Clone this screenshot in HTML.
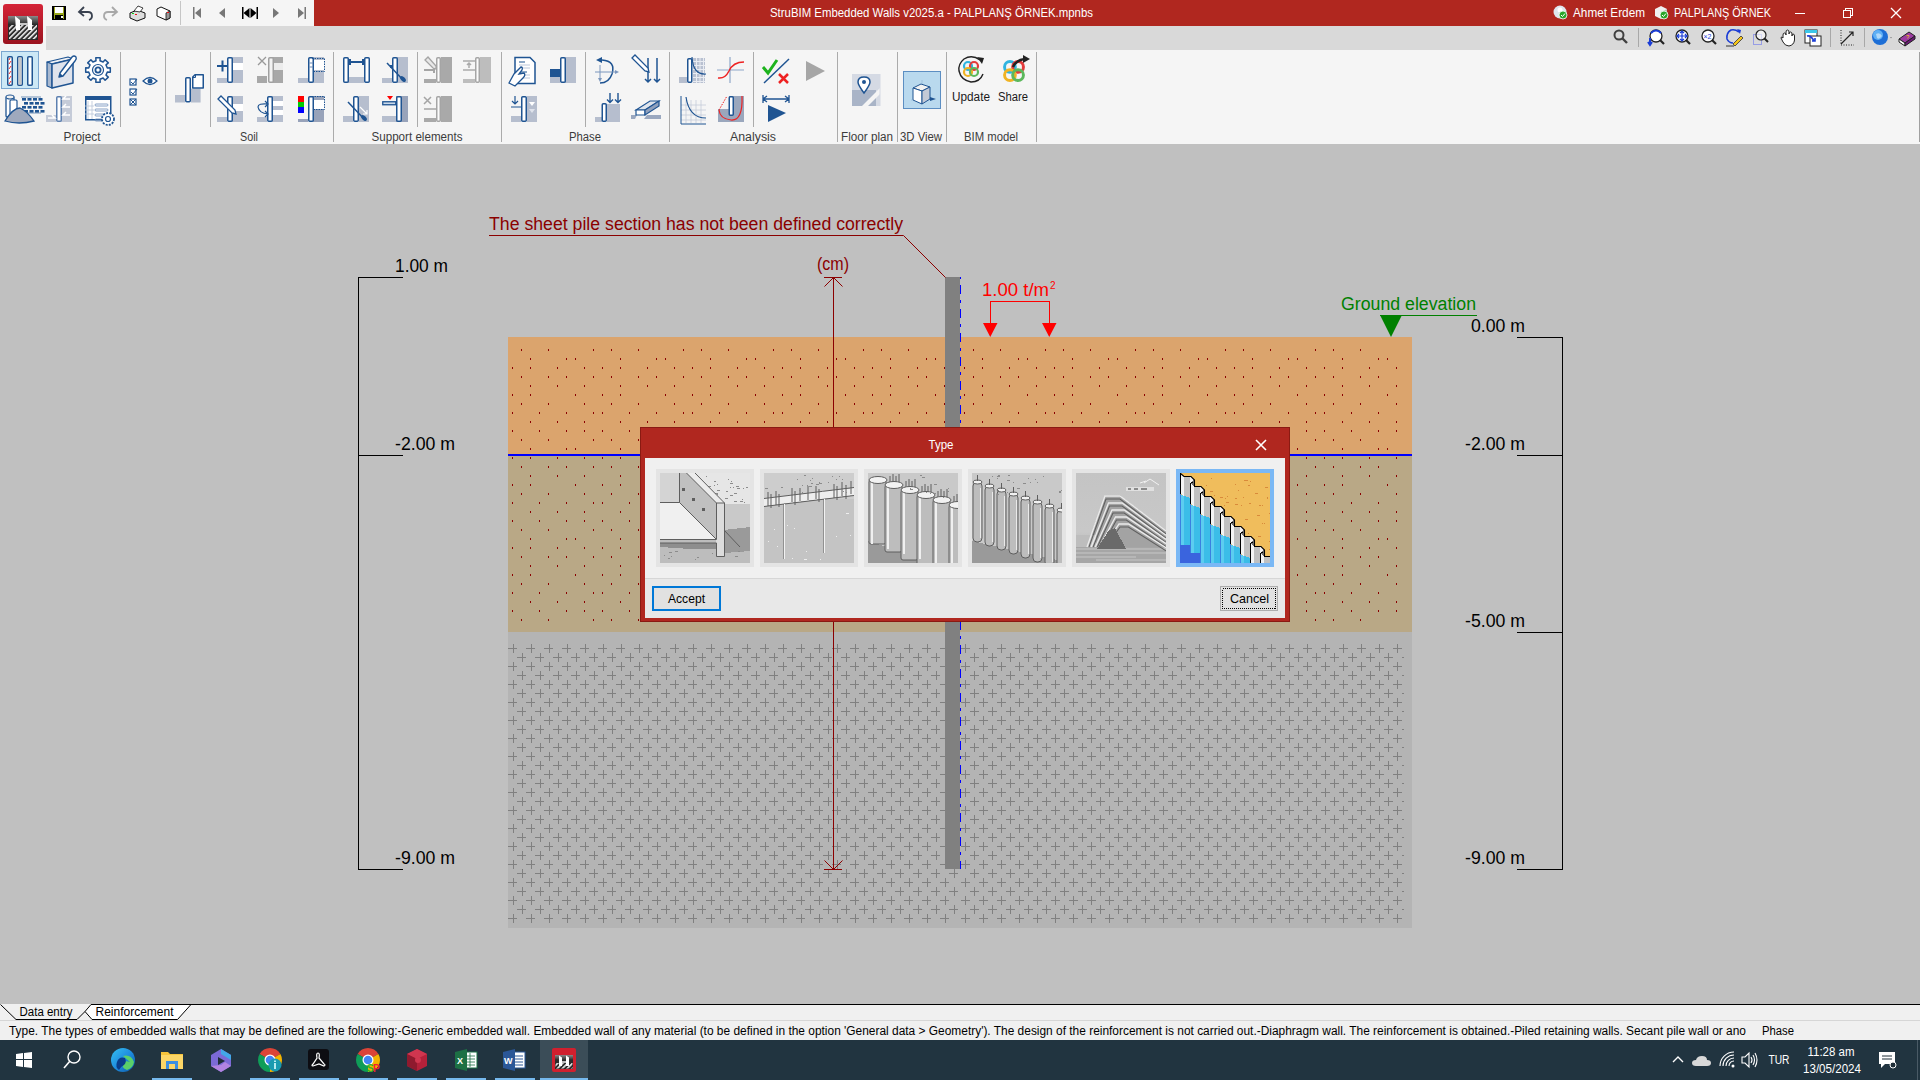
<!DOCTYPE html>
<html><head><meta charset="utf-8">
<style>
*{margin:0;padding:0}
html,body{width:1920px;height:1080px;overflow:hidden;background:#c0c0c0}
svg{position:absolute;left:0;top:0;font-family:'Liberation Sans', sans-serif}
</style></head><body>
<svg width="1920" height="1080" viewBox="0 0 1920 1080" shape-rendering="crispEdges">

<defs>
<pattern id="dotsL" patternUnits="userSpaceOnUse" x="512" y="349" width="90" height="90"><path d="M9 0h1v2h-1zM36 0h1v2h-1zM81 0h1v2h-1zM18 9h1v2h-1zM54 9h1v2h-1zM63 9h1v2h-1zM0 18h1v2h-1zM72 18h1v2h-1zM18 18h1v2h-1zM45 18h1v2h-1zM9 27h1v2h-1zM36 27h1v2h-1zM54 27h1v2h-1zM81 27h1v2h-1zM72 36h1v2h-1zM18 36h1v2h-1zM45 36h1v2h-1zM0 45h1v2h-1zM18 45h1v2h-1zM63 45h1v2h-1zM72 54h1v2h-1zM9 54h1v2h-1zM36 54h1v2h-1zM0 63h1v2h-1zM81 63h1v2h-1zM27 63h1v2h-1zM54 63h1v2h-1zM72 72h1v2h-1zM18 72h1v2h-1zM45 72h1v2h-1zM0 81h1v2h-1zM72 81h1v2h-1zM27 81h1v2h-1zM54 81h1v2h-1z" fill="#8b0000"/></pattern>
<pattern id="dotsR" patternUnits="userSpaceOnUse" x="964" y="349" width="90" height="90"><path d="M9 0h1v2h-1zM36 0h1v2h-1zM81 0h1v2h-1zM18 9h1v2h-1zM54 9h1v2h-1zM63 9h1v2h-1zM0 18h1v2h-1zM72 18h1v2h-1zM18 18h1v2h-1zM45 18h1v2h-1zM9 27h1v2h-1zM36 27h1v2h-1zM54 27h1v2h-1zM81 27h1v2h-1zM72 36h1v2h-1zM18 36h1v2h-1zM45 36h1v2h-1zM0 45h1v2h-1zM18 45h1v2h-1zM63 45h1v2h-1zM72 54h1v2h-1zM9 54h1v2h-1zM36 54h1v2h-1zM0 63h1v2h-1zM81 63h1v2h-1zM27 63h1v2h-1zM54 63h1v2h-1zM72 72h1v2h-1zM18 72h1v2h-1zM45 72h1v2h-1zM0 81h1v2h-1zM72 81h1v2h-1zM27 81h1v2h-1zM54 81h1v2h-1z" fill="#8b0000"/></pattern>
<pattern id="crossL" patternUnits="userSpaceOnUse" x="508" y="644" width="18" height="18"><path d="M0 4h9v1h-9zM5 0h1v9h-1zM9 13h9v1h-9zM14 9h1v9h-1z" fill="#808080"/></pattern>
<pattern id="crossR" patternUnits="userSpaceOnUse" x="961" y="644" width="18" height="18"><path d="M0 4h9v1h-9zM4 0h1v9h-1zM9 13h9v1h-9zM13 9h1v9h-1z" fill="#808080"/></pattern>
</defs>
<rect x="0" y="144" width="1920" height="860" fill="#c0c0c0"/>
<rect x="508" y="337" width="904" height="118" fill="#dba46d"/>
<rect x="508" y="455" width="904" height="177" fill="#b9a886"/>
<rect x="508" y="632" width="904" height="296" fill="#b4b4b4"/>
<rect x="508" y="344" width="437" height="283" fill="url(#dotsL)"/>
<rect x="961" y="344" width="442" height="283" fill="url(#dotsR)"/>
<rect x="508" y="644" width="450" height="279" fill="url(#crossL)"/>
<rect x="961" y="644" width="443" height="279" fill="url(#crossR)"/>
<rect x="508" y="454" width="904" height="2" fill="#0000ff"/>

<rect x="945" y="277" width="15" height="592" fill="#808080"/>
<line x1="960.5" y1="277" x2="960.5" y2="869" stroke="#0000ff" stroke-width="1" stroke-dasharray="9 6 3 6" stroke-dashoffset="16"/>
<path d="M358 277h45v1h-45zM358 277h1v592h-1zM358 455h45v1h-45zM358 869h45v1h-45z" fill="#000"/>
<path d="M1562 337h1v532h-1zM1517 337h45v1h-45zM1517 455h45v1h-45zM1517 632h45v1h-45zM1517 869h46v1h-46z" fill="#000"/>
<text x="395" y="272" font-size="18" fill="#000" text-anchor="start" font-weight="normal" textLength="53" lengthAdjust="spacingAndGlyphs">1.00 m</text>
<text x="395" y="450" font-size="18" fill="#000" text-anchor="start" font-weight="normal" textLength="60" lengthAdjust="spacingAndGlyphs">-2.00 m</text>
<text x="395" y="864" font-size="18" fill="#000" text-anchor="start" font-weight="normal" textLength="60" lengthAdjust="spacingAndGlyphs">-9.00 m</text>
<text x="1525" y="332" font-size="18" fill="#000" text-anchor="end" font-weight="normal" textLength="54" lengthAdjust="spacingAndGlyphs">0.00 m</text>
<text x="1525" y="450" font-size="18" fill="#000" text-anchor="end" font-weight="normal" textLength="60" lengthAdjust="spacingAndGlyphs">-2.00 m</text>
<text x="1525" y="627" font-size="18" fill="#000" text-anchor="end" font-weight="normal" textLength="60" lengthAdjust="spacingAndGlyphs">-5.00 m</text>
<text x="1525" y="864" font-size="18" fill="#000" text-anchor="end" font-weight="normal" textLength="60" lengthAdjust="spacingAndGlyphs">-9.00 m</text>
<text x="489" y="229.5" font-size="18" fill="#8b0000" text-anchor="start" font-weight="normal" textLength="414" lengthAdjust="spacingAndGlyphs">The sheet pile section has not been defined correctly</text>
<g shape-rendering="auto"><path d="M489 235.5H903.5L945.5 277.5" stroke="#8b0000" stroke-width="1" fill="none"/></g>
<text x="817" y="270" font-size="18" fill="#8b0000" text-anchor="start" font-weight="normal" textLength="32" lengthAdjust="spacingAndGlyphs">(cm)</text>
<path d="M833 277h1v593h-1zM824 277h18v1h-18zM824 869h18v1h-18z" fill="#8b0000"/>
<g shape-rendering="auto"><path d="M824.5 286.5L833.5 277.5L842.5 286.5M824.5 860.5L833.5 869.5L842.5 860.5" stroke="#8b0000" stroke-width="1" fill="none"/></g>
<text x="982" y="296" font-size="18" fill="#ff0000" text-anchor="start" font-weight="normal" textLength="67" lengthAdjust="spacingAndGlyphs">1.00 t/m</text>
<text x="1050" y="289" font-size="10" fill="#ff0000" text-anchor="start" font-weight="normal">2</text>
<path d="M990 301h60v1h-60zM990 301h1v23h-1zM1049 301h1v23h-1z" fill="#ff0000"/>
<g shape-rendering="auto"><path d="M983 323h14.5l-7.25 14zM1042 323h14.5l-7.25 14z" fill="#ff0000"/></g>
<text x="1341" y="309.5" font-size="18" fill="#008000" text-anchor="start" font-weight="normal" textLength="135" lengthAdjust="spacingAndGlyphs">Ground elevation</text>
<path d="M1380 315h97v1h-97z" fill="#008000"/>
<g shape-rendering="auto"><path d="M1380 315h22l-11 22z" fill="#008000"/></g>
<rect x="640" y="427" width="650" height="195" fill="#8a1a12"/>
<rect x="641" y="428" width="648" height="193" fill="#b0271f"/>
<rect x="645" y="458" width="640" height="160" fill="#f0f0f0"/>
<rect x="645" y="578" width="640" height="1" fill="#d6d6d6"/>
<rect x="645" y="579" width="640" height="39" fill="#e8e8e8"/>

<text x="941" y="449" font-size="12.5" fill="#fff" text-anchor="middle" font-weight="normal" textLength="25" lengthAdjust="spacingAndGlyphs">Type</text>
<g shape-rendering="auto"><path d="M1256 440l10 10M1266 440l-10 10" stroke="#fff" stroke-width="1.6"/></g>
<rect x="656" y="469" width="98" height="98" fill="#e4e4e4"/>
<rect x="760" y="469" width="98" height="98" fill="#e4e4e4"/>
<rect x="864" y="469" width="98" height="98" fill="#e4e4e4"/>
<rect x="968" y="469" width="98" height="98" fill="#e4e4e4"/>
<rect x="1072" y="469" width="98" height="98" fill="#e4e4e4"/>
<rect x="1176" y="469" width="98" height="98" fill="#7ab8f5"/>
<svg x="660" y="473" width="90" height="90" viewBox="0 0 90 90" overflow="hidden"><rect width="90" height="90" fill="#bdbdbd"/><rect x="0" y="0" width="90" height="31" fill="#e6e6e6"/><rect x="64" y="31" width="26" height="26" fill="#c9c9c9"/><path d="M64 57L90 54V78L64 80Z" fill="#9a9a9a"/><path d="M55 20h3v1h-3zM48 13h3v1h-3zM70 22h3v1h-3zM44 21h1v1h-1zM70 10h3v1h-3zM54 8h2v1h-2zM74 28h3v1h-3zM70 14h1v1h-1zM54 22h1v1h-1zM73 14h1v1h-1zM82 26h1v1h-1zM50 26h3v1h-3zM42 11h1v1h-1zM57 17h3v1h-3zM86 14h2v1h-2zM65 25h3v1h-3zM68 6h1v1h-1zM46 3h1v1h-1zM71 8h1v1h-1zM83 15h1v1h-1zM66 18h2v1h-2zM76 13h3v1h-3zM77 15h3v1h-3zM54 12h1v1h-1zM57 21h1v1h-1zM84 29h1v1h-1zM74 20h3v1h-3zM46 24h1v1h-1zM80 28h3v1h-3zM57 11h1v1h-1z" fill="#8c8c8c"/><path d="M8 85h2v1h-2zM11 83h1v1h-1zM52 80h1v1h-1zM37 84h2v1h-2zM15 78h3v1h-3zM78 78h2v1h-2zM75 83h3v1h-3zM35 86h1v1h-1zM4 82h1v1h-1zM9 79h3v1h-3z" fill="#8c8c8c"/><rect x="0" y="0" width="19" height="30" fill="#d4d4d4"/><path d="M0 30H19L56 66H0Z" fill="#f0f0f0"/><path d="M0 70H56V76H30L0 74Z" fill="#8e8e8e"/><path d="M19 0H26L56 30V66L19 30Z" fill="#c0c0c0"/><path d="M26 0H35L64 30H56Z" fill="#ececec"/><rect x="56" y="30" width="8" height="53" fill="#dcdcdc"/><g fill="none" stroke="#5e5e5e" stroke-width="1" shape-rendering="auto"><path d="M19.5 0V29.5H0M19.5 29.5L56.5 66.5H0M26.5 0L56.5 30V66M35 0L64.5 30V83.5H56.5V70H0M56.5 30H64.5M64 57L80 74"/></g><path d="M22 15h3v3h-3zM32 25h3v3h-3zM42 35h3v3h-3z" fill="#5e5e5e"/></svg>
<svg x="764" y="473" width="90" height="90" viewBox="0 0 90 90" overflow="hidden"><rect width="90" height="90" fill="#c4c4c4"/><rect width="90" height="26" fill="#cdcdcd"/><path d="M0 25L90 15V22L0 33Z" fill="#eeeeee"/><g shape-rendering="auto" fill="none" stroke="#5e5e5e"><path d="M0 25.5L90 14.5M0 33.5L90 22.5M20 31V86M60 26V80"/><path d="M4 19v14M7 21v14M12 18v14M15 21v13M28 15v14M31 18v14M36 15v13M44 13v14M52 13v13M55 16v13M70 11v14M73 13v14M78 9v14M82 12v14M87 8v13"/></g><path d="M20 31h1v55h-1zM60 26h1v54h-1z" fill="#f2f2f2"/><path d="M68 3h1v1h-1zM52 11h3v1h-3zM33 6h1v1h-1zM43 12h1v1h-1zM17 14h2v1h-2zM58 18h2v1h-2zM82 19h1v1h-1zM79 18h1v1h-1zM55 9h1v1h-1zM55 10h3v1h-3zM38 19h1v1h-1zM1 15h3v1h-3zM40 2h2v1h-2zM78 6h1v1h-1zM81 12h2v1h-2zM45 13h3v1h-3zM35 17h1v1h-1zM75 3h1v1h-1zM47 10h2v1h-2zM38 12h1v1h-1zM46 7h1v1h-1zM47 10h1v1h-1zM48 5h1v1h-1zM72 6h1v1h-1zM64 9h1v1h-1z" fill="#8c8c8c"/><path d="M30 55h1v1h-1zM86 62h1v1h-1zM13 73h1v1h-1zM42 78h1v1h-1zM56 86h1v1h-1zM10 56h1v1h-1zM72 63h1v1h-1zM28 85h1v1h-1zM4 68h1v1h-1zM40 86h3v1h-3zM23 52h1v1h-1zM82 40h3v1h-3z" fill="#eeeeee"/></svg>
<svg x="868" y="473" width="90" height="90" viewBox="0 0 90 90" overflow="hidden"><rect width="90" height="90" fill="#c9c9c9"/><path d="M0 68L70 90H0Z" fill="#9a9a9a"/><rect x="1" y="7" width="17" height="64" rx="2" fill="#bdbdbd" stroke="#5e5e5e" stroke-width="1" shape-rendering="auto"/><rect x="3" y="9" width="2" height="62" fill="#f0f0f0"/><ellipse cx="10" cy="7" rx="9" ry="3.5" fill="#f2f2f2" stroke="#5e5e5e" shape-rendering="auto"/><path d="M22 11v-8M25 9v-8M28 11v-8M31 9v-8" stroke="#5e5e5e" shape-rendering="auto"/><rect x="17" y="12" width="17" height="67" rx="2" fill="#bdbdbd" stroke="#5e5e5e" stroke-width="1" shape-rendering="auto"/><rect x="19" y="14" width="2" height="62" fill="#f0f0f0"/><ellipse cx="26" cy="12" rx="9" ry="3.5" fill="#f2f2f2" stroke="#5e5e5e" shape-rendering="auto"/><path d="M38 16v-8M41 14v-8M44 16v-8M47 14v-8" stroke="#5e5e5e" shape-rendering="auto"/><rect x="33" y="17" width="17" height="70" rx="2" fill="#bdbdbd" stroke="#5e5e5e" stroke-width="1" shape-rendering="auto"/><rect x="35" y="19" width="2" height="62" fill="#f0f0f0"/><ellipse cx="42" cy="17" rx="9" ry="3.5" fill="#f2f2f2" stroke="#5e5e5e" shape-rendering="auto"/><path d="M54 21v-8M57 19v-8M60 21v-8M63 19v-8" stroke="#5e5e5e" shape-rendering="auto"/><rect x="49" y="22" width="17" height="73" rx="2" fill="#bdbdbd" stroke="#5e5e5e" stroke-width="1" shape-rendering="auto"/><rect x="51" y="24" width="2" height="62" fill="#f0f0f0"/><ellipse cx="58" cy="22" rx="9" ry="3.5" fill="#f2f2f2" stroke="#5e5e5e" shape-rendering="auto"/><path d="M70 26v-8M73 24v-8M76 26v-8M79 24v-8" stroke="#5e5e5e" shape-rendering="auto"/><rect x="65" y="27" width="17" height="76" rx="2" fill="#bdbdbd" stroke="#5e5e5e" stroke-width="1" shape-rendering="auto"/><rect x="67" y="29" width="2" height="62" fill="#f0f0f0"/><ellipse cx="74" cy="27" rx="9" ry="3.5" fill="#f2f2f2" stroke="#5e5e5e" shape-rendering="auto"/><path d="M86 31v-8M89 29v-8M92 31v-8M95 29v-8" stroke="#5e5e5e" shape-rendering="auto"/><rect x="81" y="32" width="17" height="79" rx="2" fill="#bdbdbd" stroke="#5e5e5e" stroke-width="1" shape-rendering="auto"/><rect x="83" y="34" width="2" height="62" fill="#f0f0f0"/><ellipse cx="90" cy="32" rx="9" ry="3.5" fill="#f2f2f2" stroke="#5e5e5e" shape-rendering="auto"/><path d="M102 36v-8M105 34v-8M108 36v-8M111 34v-8" stroke="#5e5e5e" shape-rendering="auto"/><path d="M62 20h1v1h-1zM66 11h3v1h-3zM57 16h1v1h-1zM80 15h1v1h-1zM66 20h2v1h-2zM42 15h1v1h-1zM52 2h2v1h-2zM79 18h2v1h-2zM75 24h1v1h-1zM42 16h3v1h-3zM58 19h1v1h-1zM54 4h3v1h-3z" fill="#8c8c8c"/></svg>
<svg x="972" y="473" width="90" height="90" viewBox="0 0 90 90" overflow="hidden"><rect width="90" height="90" fill="#c9c9c9"/><path d="M0 68L90 88V90H0Z" fill="#9a9a9a"/><rect x="1" y="9" width="9" height="60" rx="4" fill="#bdbdbd" stroke="#5e5e5e" shape-rendering="auto"/><ellipse cx="5.5" cy="9" rx="4.5" ry="2" fill="#f2f2f2" stroke="#5e5e5e" shape-rendering="auto"/><rect x="5" y="2" width="1" height="6" fill="#5e5e5e"/><rect x="8" y="15" width="1" height="50" fill="#eaeaea"/><rect x="13" y="13" width="9" height="60" rx="4" fill="#bdbdbd" stroke="#5e5e5e" shape-rendering="auto"/><ellipse cx="17.5" cy="13" rx="4.5" ry="2" fill="#f2f2f2" stroke="#5e5e5e" shape-rendering="auto"/><rect x="17" y="6" width="1" height="6" fill="#5e5e5e"/><rect x="20" y="19" width="1" height="50" fill="#eaeaea"/><rect x="25" y="17" width="9" height="60" rx="4" fill="#bdbdbd" stroke="#5e5e5e" shape-rendering="auto"/><ellipse cx="29.5" cy="17" rx="4.5" ry="2" fill="#f2f2f2" stroke="#5e5e5e" shape-rendering="auto"/><rect x="29" y="10" width="1" height="6" fill="#5e5e5e"/><rect x="32" y="23" width="1" height="50" fill="#eaeaea"/><rect x="37" y="21" width="9" height="60" rx="4" fill="#bdbdbd" stroke="#5e5e5e" shape-rendering="auto"/><ellipse cx="41.5" cy="21" rx="4.5" ry="2" fill="#f2f2f2" stroke="#5e5e5e" shape-rendering="auto"/><rect x="41" y="14" width="1" height="6" fill="#5e5e5e"/><rect x="44" y="27" width="1" height="50" fill="#eaeaea"/><rect x="49" y="25" width="9" height="60" rx="4" fill="#bdbdbd" stroke="#5e5e5e" shape-rendering="auto"/><ellipse cx="53.5" cy="25" rx="4.5" ry="2" fill="#f2f2f2" stroke="#5e5e5e" shape-rendering="auto"/><rect x="53" y="18" width="1" height="6" fill="#5e5e5e"/><rect x="56" y="31" width="1" height="50" fill="#eaeaea"/><rect x="61" y="29" width="9" height="60" rx="4" fill="#bdbdbd" stroke="#5e5e5e" shape-rendering="auto"/><ellipse cx="65.5" cy="29" rx="4.5" ry="2" fill="#f2f2f2" stroke="#5e5e5e" shape-rendering="auto"/><rect x="65" y="22" width="1" height="6" fill="#5e5e5e"/><rect x="68" y="35" width="1" height="50" fill="#eaeaea"/><rect x="73" y="33" width="9" height="60" rx="4" fill="#bdbdbd" stroke="#5e5e5e" shape-rendering="auto"/><ellipse cx="77.5" cy="33" rx="4.5" ry="2" fill="#f2f2f2" stroke="#5e5e5e" shape-rendering="auto"/><rect x="77" y="26" width="1" height="6" fill="#5e5e5e"/><rect x="80" y="39" width="1" height="50" fill="#eaeaea"/><rect x="85" y="37" width="9" height="60" rx="4" fill="#bdbdbd" stroke="#5e5e5e" shape-rendering="auto"/><ellipse cx="89.5" cy="37" rx="4.5" ry="2" fill="#f2f2f2" stroke="#5e5e5e" shape-rendering="auto"/><rect x="89" y="30" width="1" height="6" fill="#5e5e5e"/><rect x="92" y="43" width="1" height="50" fill="#eaeaea"/><path d="M56 5h1v1h-1zM25 3h3v1h-3zM45 15h3v1h-3zM26 2h2v1h-2zM35 7h3v1h-3zM58 9h1v1h-1zM87 19h2v1h-2zM26 21h1v1h-1zM63 6h1v1h-1zM89 17h1v1h-1zM65 9h1v1h-1zM35 19h1v1h-1zM41 9h1v1h-1zM36 2h2v1h-2zM71 3h1v1h-1zM51 10h3v1h-3zM87 18h2v1h-2zM26 17h1v1h-1zM20 3h1v1h-1zM25 5h1v1h-1z" fill="#8c8c8c"/></svg>
<svg x="1076" y="473" width="90" height="90" viewBox="0 0 90 90" overflow="hidden"><defs><linearGradient id="t5" x1="0" y1="0" x2="0" y2="1"><stop offset="0" stop-color="#c4c4c4"/><stop offset="0.65" stop-color="#c8c8c8"/><stop offset="1" stop-color="#b0b0b0"/></linearGradient></defs><rect width="90" height="90" fill="url(#t5)"/><path d="M10 75L29 22H44L90 58V76Z" fill="#a3a3a3"/><rect x="0" y="62" width="20" height="14" fill="#bdbdbd"/><rect x="0" y="74" width="90" height="16" fill="#a6a6a6"/><path d="M0 76H90M0 80H90M0 84H60M20 87H90" stroke="#d0d0d0" stroke-width="0.8" shape-rendering="auto"/><path d="M11.0 74L29.0 23H44.0L90 58.0" fill="none" stroke="#ececec" stroke-width="1.3" shape-rendering="auto"/><path d="M13.0 74L30.0 26H44.0L90 61.0" fill="none" stroke="#5e5e5e" stroke-width="1.1" shape-rendering="auto"/><path d="M15.2 74L32.5 30H46.1L90 62.2" fill="none" stroke="#ececec" stroke-width="1.3" shape-rendering="auto"/><path d="M17.2 74L33.5 33H46.1L90 65.2" fill="none" stroke="#5e5e5e" stroke-width="1.1" shape-rendering="auto"/><path d="M19.4 74L36.0 37H48.2L90 66.4" fill="none" stroke="#ececec" stroke-width="1.3" shape-rendering="auto"/><path d="M21.4 74L37.0 40H48.2L90 69.4" fill="none" stroke="#5e5e5e" stroke-width="1.1" shape-rendering="auto"/><path d="M23.6 74L39.5 44H50.3L90 70.6" fill="none" stroke="#ececec" stroke-width="1.3" shape-rendering="auto"/><path d="M25.6 74L40.5 47H50.3L90 73.6" fill="none" stroke="#5e5e5e" stroke-width="1.1" shape-rendering="auto"/><path d="M27.8 74L43.0 51H52.4L90 74.8" fill="none" stroke="#ececec" stroke-width="1.3" shape-rendering="auto"/><path d="M29.8 74L44.0 54H52.4L90 77.8" fill="none" stroke="#5e5e5e" stroke-width="1.1" shape-rendering="auto"/><path d="M21 76L33 57L39 55L50 76Z" fill="#6a6a6a"/><path d="M50 14h28v4h-28z" fill="#e0e0e0"/><path d="M52 15h3v2h-3zM58 15h4v2h-4zM65 15h6v2h-6z" fill="#8a8a8a"/><path d="M68 10l6-4l9 6M64 10l6-2" stroke="#f2f2f2" stroke-width="1" fill="none" shape-rendering="auto"/></svg>
<svg x="1180" y="473" width="90" height="90" viewBox="0 0 90 90" overflow="hidden"><rect width="90" height="90" fill="#f0bd5c"/><path d="M23 63h1v1h-1zM26 67h3v1h-3zM77 42h1v1h-1zM55 11h1v1h-1zM64 84h2v1h-2zM53 48h1v1h-1zM39 44h2v1h-2zM30 18h3v1h-3zM15 50h1v1h-1zM87 24h1v1h-1zM62 60h3v1h-3zM84 50h1v1h-1zM70 8h1v1h-1zM78 42h2v1h-2zM68 60h1v1h-1zM46 29h3v1h-3zM49 77h1v1h-1zM69 30h2v1h-2zM31 5h1v1h-1zM62 73h1v1h-1zM30 61h1v1h-1zM82 50h1v1h-1zM55 74h3v1h-3zM28 77h1v1h-1zM75 20h1v1h-1zM64 7h3v1h-3zM26 74h1v1h-1zM63 24h1v1h-1zM58 17h1v1h-1zM29 63h1v1h-1zM89 40h1v1h-1zM19 74h3v1h-3zM82 32h1v1h-1zM85 14h3v1h-3zM22 72h1v1h-1zM87 25h1v1h-1zM45 25h1v1h-1zM73 80h2v1h-2zM47 49h3v1h-3zM65 46h3v1h-3zM68 12h2v1h-2zM79 32h2v1h-2zM35 55h3v1h-3zM89 68h2v1h-2zM34 84h2v1h-2zM34 22h1v1h-1zM78 63h3v1h-3zM71 77h1v1h-1zM32 36h1v1h-1zM33 76h3v1h-3zM55 31h3v1h-3zM52 54h3v1h-3zM89 76h1v1h-1zM42 41h1v1h-1zM49 63h2v1h-2zM40 24h3v1h-3zM61 32h1v1h-1zM76 20h2v1h-2zM76 78h1v1h-1zM74 76h3v1h-3zM18 63h1v1h-1zM66 7h2v1h-2zM44 32h1v1h-1zM42 34h1v1h-1zM39 35h1v1h-1zM38 81h1v1h-1zM47 23h1v1h-1zM55 25h2v1h-2zM26 12h1v1h-1zM26 35h1v1h-1z" fill="#d98a3a"/><path d="M0 21L10 25V90H0Z" fill="#3bbde8"/><rect x="1" y="22" width="3" height="68" fill="#5ccdf0"/><rect x="0" y="21" width="1" height="69" fill="#3a80e0"/><path d="M10 31L20 35V90H10Z" fill="#3bbde8"/><rect x="11" y="32" width="3" height="58" fill="#5ccdf0"/><rect x="10" y="31" width="1" height="59" fill="#3a80e0"/><path d="M20 41L30 45V90H20Z" fill="#3bbde8"/><rect x="21" y="42" width="3" height="48" fill="#5ccdf0"/><rect x="20" y="41" width="1" height="49" fill="#3a80e0"/><path d="M30 51L40 55V90H30Z" fill="#3bbde8"/><rect x="31" y="52" width="3" height="38" fill="#5ccdf0"/><rect x="30" y="51" width="1" height="39" fill="#3a80e0"/><path d="M40 61L50 65V90H40Z" fill="#3bbde8"/><rect x="41" y="62" width="3" height="28" fill="#5ccdf0"/><rect x="40" y="61" width="1" height="29" fill="#3a80e0"/><path d="M50 71L60 75V90H50Z" fill="#3bbde8"/><rect x="51" y="72" width="3" height="18" fill="#5ccdf0"/><rect x="50" y="71" width="1" height="19" fill="#3a80e0"/><path d="M60 81L70 85V90H60Z" fill="#3bbde8"/><rect x="61" y="82" width="3" height="8" fill="#5ccdf0"/><rect x="60" y="81" width="1" height="9" fill="#3a80e0"/><path d="M70 91L80 95V90H70Z" fill="#3bbde8"/><rect x="71" y="92" width="3" height="-2" fill="#5ccdf0"/><rect x="70" y="91" width="1" height="-1" fill="#3a80e0"/><path d="M80 101L90 105V90H80Z" fill="#3bbde8"/><rect x="81" y="102" width="3" height="-12" fill="#5ccdf0"/><rect x="80" y="101" width="1" height="-11" fill="#3a80e0"/><path d="M0 72H10V90H0ZM10 80H20V90H10Z" fill="#3a64de"/><path d="M1 1L4 4V23L1 21Z" fill="#f4f4f4"/><path d="M4 4H10V25L4 23Z" fill="#c0c0c0"/><path d="M10 4H11L14 7L10 10Z" fill="#f4f4f4"/><path d="M10 10L14 7V14H10Z" fill="#6e6e6e"/><circle cx="12" cy="9.5" r="1" fill="#000"/><rect x="0" y="0" width="1" height="21" fill="#000"/><path d="M11 11L14 14V33L11 31Z" fill="#f4f4f4"/><path d="M14 14H20V35L14 33Z" fill="#c0c0c0"/><path d="M20 14H21L24 17L20 20Z" fill="#f4f4f4"/><path d="M20 20L24 17V24H20Z" fill="#6e6e6e"/><circle cx="22" cy="19.5" r="1" fill="#000"/><rect x="10" y="10" width="1" height="21" fill="#000"/><path d="M21 21L24 24V43L21 41Z" fill="#f4f4f4"/><path d="M24 24H30V45L24 43Z" fill="#c0c0c0"/><path d="M30 24H31L34 27L30 30Z" fill="#f4f4f4"/><path d="M30 30L34 27V34H30Z" fill="#6e6e6e"/><circle cx="32" cy="29.5" r="1" fill="#000"/><rect x="20" y="20" width="1" height="21" fill="#000"/><path d="M31 31L34 34V53L31 51Z" fill="#f4f4f4"/><path d="M34 34H40V55L34 53Z" fill="#c0c0c0"/><path d="M40 34H41L44 37L40 40Z" fill="#f4f4f4"/><path d="M40 40L44 37V44H40Z" fill="#6e6e6e"/><circle cx="42" cy="39.5" r="1" fill="#000"/><rect x="30" y="30" width="1" height="21" fill="#000"/><path d="M41 41L44 44V63L41 61Z" fill="#f4f4f4"/><path d="M44 44H50V65L44 63Z" fill="#c0c0c0"/><path d="M50 44H51L54 47L50 50Z" fill="#f4f4f4"/><path d="M50 50L54 47V54H50Z" fill="#6e6e6e"/><circle cx="52" cy="49.5" r="1" fill="#000"/><rect x="40" y="40" width="1" height="21" fill="#000"/><path d="M51 51L54 54V73L51 71Z" fill="#f4f4f4"/><path d="M54 54H60V75L54 73Z" fill="#c0c0c0"/><path d="M60 54H61L64 57L60 60Z" fill="#f4f4f4"/><path d="M60 60L64 57V64H60Z" fill="#6e6e6e"/><circle cx="62" cy="59.5" r="1" fill="#000"/><rect x="50" y="50" width="1" height="21" fill="#000"/><path d="M61 61L64 64V83L61 81Z" fill="#f4f4f4"/><path d="M64 64H70V85L64 83Z" fill="#c0c0c0"/><path d="M70 64H71L74 67L70 70Z" fill="#f4f4f4"/><path d="M70 70L74 67V74H70Z" fill="#6e6e6e"/><circle cx="72" cy="69.5" r="1" fill="#000"/><rect x="60" y="60" width="1" height="21" fill="#000"/><path d="M71 71L74 74V93L71 91Z" fill="#f4f4f4"/><path d="M74 74H80V95L74 93Z" fill="#c0c0c0"/><path d="M80 74H81L84 77L80 80Z" fill="#f4f4f4"/><path d="M80 80L84 77V84H80Z" fill="#6e6e6e"/><circle cx="82" cy="79.5" r="1" fill="#000"/><rect x="70" y="70" width="1" height="21" fill="#000"/><path d="M81 81L84 84V103L81 101Z" fill="#f4f4f4"/><path d="M84 84H90V105L84 103Z" fill="#c0c0c0"/><path d="M90 84H91L94 87L90 90Z" fill="#f4f4f4"/><path d="M90 90L94 87V94H90Z" fill="#6e6e6e"/><circle cx="92" cy="89.5" r="1" fill="#000"/><rect x="80" y="80" width="1" height="21" fill="#000"/><path d="M0.5 0.5L4 3.5H11L14.5 7V13.5L14 13.5H21L24.5 17V23.5L24 23.5H31L34.5 27V33.5L34 33.5H41L44.5 37V43.5L44 43.5H51L54.5 47V53.5L54 53.5H61L64.5 57V63.5L64 63.5H71L74.5 67V73.5L74 73.5H81L84.5 77V83.5L84 83.5H91L94.5 87V93.5" fill="none" stroke="#000" stroke-width="1.1" shape-rendering="auto"/></svg>
<rect x="652" y="586" width="69" height="25" fill="#0078d7"/>
<rect x="654" y="588" width="65" height="21" fill="#e1e1e1"/>
<rect x="1220" y="586" width="58" height="25" fill="#adadad"/>
<rect x="1221" y="587" width="56" height="23" fill="#e1e1e1"/>
<rect x="1222.5" y="588.5" width="53" height="20" fill="none" stroke="#000" stroke-width="1" stroke-dasharray="1 1"/>

<text x="668" y="603" font-size="13" fill="#000" text-anchor="start" font-weight="normal" textLength="37" lengthAdjust="spacingAndGlyphs">Accept</text>
<text x="1230" y="603" font-size="13" fill="#000" text-anchor="start" font-weight="normal" textLength="39" lengthAdjust="spacingAndGlyphs">Cancel</text>
<rect x="0" y="0" width="1920" height="50" fill="#d9d9d9"/>
<rect x="0" y="0" width="314" height="26" fill="#f5f5f5"/>
<rect x="0" y="0" width="46" height="50" fill="#f5f5f5"/>
<rect x="314" y="0" width="1606" height="26" fill="#b0271f"/>
<rect x="0" y="50" width="1920" height="94" fill="#f5f5f5"/>

<text x="770" y="17" font-size="12.5" fill="#fff" text-anchor="start" font-weight="normal" textLength="323" lengthAdjust="spacingAndGlyphs">StruBIM Embedded Walls v2025.a - PALPLANŞ ÖRNEK.mpnbs</text>
<text x="1573" y="17" font-size="12.5" fill="#fff" text-anchor="start" font-weight="normal" textLength="72" lengthAdjust="spacingAndGlyphs">Ahmet Erdem</text>
<text x="1674" y="17" font-size="12.5" fill="#fff" text-anchor="start" font-weight="normal" textLength="97" lengthAdjust="spacingAndGlyphs">PALPLANŞ ÖRNEK</text>
<rect x="1795" y="13" width="10" height="1" fill="#fff"/>
<path d="M1843.5 10.5h7v7h-7zM1845.5 10.5v-2h7v7h-2" stroke="#fff" fill="none"/>
<g shape-rendering="auto"><path d="M1891 8l10 10M1901 8l-10 10" stroke="#fff" stroke-width="1.3"/></g>
<g transform="translate(3,4)" shape-rendering="auto"><defs><linearGradient id="lg" x1="0" y1="0" x2="0" y2="1"><stop offset="0" stop-color="#d42437"/><stop offset="1" stop-color="#9b1420"/></linearGradient><pattern id="hat" patternUnits="userSpaceOnUse" width="3.5" height="3.5" patternTransform="rotate(45)"><rect width="3.5" height="3.5" fill="#2e2e2e"/><rect width="1.6" height="3.5" fill="#e8e8e8"/></pattern><linearGradient id="lgd" x1="0" y1="0" x2="0" y2="1"><stop offset="0" stop-color="#8a8a8a"/><stop offset="0.35" stop-color="#2b2b2b"/></linearGradient></defs><rect x="0" y="0" width="40" height="40" rx="3" fill="url(#lg)"/><rect x="5" y="12" width="30" height="24" fill="url(#lgd)"/><rect x="6" y="21" width="28" height="14" fill="url(#hat)"/><path d="M12 12L17 16V26H13Z" fill="#fff"/><path d="M24 12L29 16V26H25Z" fill="#fff"/><path d="M17 19H25V21H17Z" fill="#c8c8c8"/></g>
<g transform="translate(52,6)" shape-rendering="auto"><rect x="0" y="0" width="14" height="14" fill="#000"/><rect x="2" y="1" width="10" height="12" fill="#9aa81a"/><rect x="3" y="1" width="8" height="6" fill="#fff"/><rect x="3" y="9" width="8" height="4" fill="#000"/><rect x="9" y="10" width="2" height="2" fill="#fff"/></g>
<g transform="translate(77,5)" shape-rendering="auto"><path d="M3 7H11Q15 7 15 11Q15 14 12 15" fill="none" stroke="#3a4250" stroke-width="1.8"/><path d="M7 2L2 7L7 11" fill="none" stroke="#3a4250" stroke-width="1.8"/></g>
<g transform="translate(103,5)" shape-rendering="auto"><path d="M13 7H5Q1 7 1 11Q1 14 4 15" fill="none" stroke="#a8a8a8" stroke-width="1.8"/><path d="M9 2L14 7L9 11" fill="none" stroke="#a8a8a8" stroke-width="1.8"/></g>
<g transform="translate(129,5)" shape-rendering="auto"><path d="M1 8L8 5L16 8V13L8 16L1 13Z" fill="#ddd" stroke="#111" stroke-width="1"/><path d="M5 6L9 1L14 3L11 7Z" fill="#fff" stroke="#111" stroke-width="0.8"/><rect x="3" y="8" width="2" height="1" fill="#1c1"/><rect x="6" y="9" width="2" height="1" fill="#e11"/></g>
<g transform="translate(155,5)" shape-rendering="auto"><path d="M2 4L6 2L15 6V13L11 15L2 11Z" fill="#fff" stroke="#111" stroke-width="1"/><path d="M11 8L15 6V13L11 15Z" fill="#999" stroke="#111" stroke-width="0.8"/><rect x="12" y="7" width="2" height="1" fill="#e11"/></g>
<rect x="180" y="1" width="1" height="24" fill="#c6c6c6"/>
<g transform="translate(193,7)" shape-rendering="auto"><rect x="0" y="0" width="1.5" height="12" fill="#777"/><path d="M8 1V11L2 6Z" fill="#777"/></g>
<g transform="translate(219,8)" shape-rendering="auto"><path d="M6 0V10L0 5Z" fill="#777"/></g>
<g transform="translate(242,7)" shape-rendering="auto"><rect x="0" y="0" width="1.5" height="12" fill="#000"/><path d="M7.5 1V11L1.5 6Z" fill="#000"/><path d="M8.5 1V11L14.5 6Z" fill="#000"/><rect x="14.5" y="0" width="1.5" height="12" fill="#000"/></g>
<g transform="translate(273,8)" shape-rendering="auto"><path d="M0 0V10L6 5Z" fill="#777"/></g>
<g transform="translate(298,7)" shape-rendering="auto"><path d="M0 1V11L6 6Z" fill="#777"/><rect x="6.5" y="0" width="1.5" height="12" fill="#777"/></g>
<g transform="translate(1553,5)" shape-rendering="auto"><circle cx="7" cy="7" r="6.5" fill="#dfe6ee"/><circle cx="7" cy="5" r="2.5" fill="#fff"/><circle cx="10" cy="10" r="4" fill="#2aa52a" stroke="#fff" stroke-width="0.8"/><path d="M8 10l1.5 1.5L12 8.5" stroke="#fff" stroke-width="1" fill="none"/></g>
<g transform="translate(1654,5)" shape-rendering="auto"><path d="M1 4L7 1L13 4V11L7 14L1 11Z" fill="#f0f0f0"/><path d="M7 7L13 4V11L7 14Z" fill="#bbb"/><circle cx="10" cy="10" r="4" fill="#2aa52a" stroke="#fff" stroke-width="0.8"/><path d="M8 10l1.5 1.5L12 8.5" stroke="#fff" stroke-width="1" fill="none"/></g>
<g transform="translate(1613,29)" shape-rendering="auto"><circle cx="6" cy="6" r="4.5" fill="none" stroke="#404040" stroke-width="2"/><path d="M9 9L14 14" stroke="#404040" stroke-width="2.4"/></g>
<rect x="1638" y="28" width="1" height="19" fill="#a8a8a8"/>
<g transform="translate(1648,29)" shape-rendering="auto"><circle cx="8" cy="7" r="6" fill="#fff" stroke="#222" stroke-width="1.3"/><path d="M12 11L16 15" stroke="#222" stroke-width="2.2"/><path d="M3 4Q8 -1 13 4" fill="none" stroke="#1a3cd6" stroke-width="2"/><path d="M2 9V15M0 13L2 16L4 13" stroke="#1a3cd6" stroke-width="2" fill="none"/></g>
<g transform="translate(1674,29)" shape-rendering="auto"><circle cx="8" cy="7" r="6" fill="#fff" stroke="#222" stroke-width="1.3"/><path d="M8 2V12M3 7H13M6 4L8 2L10 4M6 10L8 12L10 10M5 5L3 7L5 9M11 5L13 7L11 9" stroke="#1a3cd6" stroke-width="1.2" fill="none"/><path d="M12 11L16 15" stroke="#222" stroke-width="2.2"/></g>
<g transform="translate(1700,29)" shape-rendering="auto"><circle cx="8" cy="7" r="6" fill="#fff" stroke="#222" stroke-width="1.3"/><text x="3.5" y="10" font-size="7" fill="#1a3cd6">×2</text><path d="M12 11L16 15" stroke="#222" stroke-width="2.2"/></g>
<g transform="translate(1726,29)" shape-rendering="auto"><path d="M13 3Q9 0 5 1Q0 4 1 10Q3 14 7 14" fill="none" stroke="#1a3cd6" stroke-width="1.6"/><path d="M11 0L15 1L14 5Z" fill="#1a3cd6"/><path d="M7 15L15 7L17 9L9 17Z" fill="#f5c518" stroke="#333" stroke-width="0.8"/><path d="M0 17H8" stroke="#333"/></g>
<g transform="translate(1752,29)" shape-rendering="auto"><rect x="1.5" y="5.5" width="8" height="10" fill="none" stroke="#5560f0" stroke-dasharray="1 1"/><circle cx="9" cy="6" r="5" fill="#fff" fill-opacity="0.6" stroke="#222" stroke-width="1.2"/><path d="M12.5 9.5L16 13" stroke="#222" stroke-width="2"/></g>
<g transform="translate(1780,29)" shape-rendering="auto"><path d="M3 9V6Q3 4 4.5 4Q6 4 6 6V3Q6 1 7.5 1Q9 1 9 3V5Q9 3 10.5 3Q12 3 12 5V7Q12 5 13 5Q14.5 5 14.5 7V11Q14 16 9 17Q5 17 3 13L1 9Q1 7 3 9Z" fill="#fff" stroke="#222" stroke-width="1"/></g>
<g transform="translate(1804,29)" shape-rendering="auto"><rect x="1" y="1" width="12" height="13" fill="#fff" stroke="#222"/><rect x="1" y="1" width="12" height="3" fill="#3cc6e8"/><rect x="6" y="7" width="11" height="10" fill="#fff" stroke="#222"/><path d="M3 7Q7 6 10 12M8 12H11V9" stroke="#1a3cd6" stroke-width="1.6" fill="none"/></g>
<rect x="1830" y="28" width="1" height="19" fill="#a8a8a8"/>
<g transform="translate(1838,29)" shape-rendering="auto"><path d="M3 1V16H16" fill="none" stroke="#222" stroke-dasharray="1 1.5"/><path d="M3 15L15 3M11 3H15V7" stroke="#222" stroke-width="1.2" fill="none"/></g>
<rect x="1864" y="28" width="1" height="19" fill="#a8a8a8"/>
<g transform="translate(1872,29)" shape-rendering="auto"><circle cx="8" cy="8" r="8" fill="#1e6fd6"/><circle cx="6" cy="6" r="5" fill="#5fb0f5"/><path d="M4 5Q8 3 10 7Q7 11 5 9Z" fill="#fff" fill-opacity="0.5"/><path d="M18 8l2 0l-1 1.5z" fill="#888"/></g>
<g transform="translate(1898,29)" shape-rendering="auto"><path d="M1 10L11 3L17 7L7 14Z" fill="#9b3aa0" stroke="#222"/><path d="M1 10V13L7 17V14Z" fill="#fff" stroke="#222"/><path d="M7 14V17L17 10V7Z" fill="#6d1a77" stroke="#222"/><text x="8" y="10" font-size="6" fill="#f5d000">?</text></g>
<rect x="1.5" y="51.5" width="37" height="37" fill="#cce8f6" stroke="#7ba6cf"/>
<g transform="translate(7,56)" shape-rendering="auto"><rect x="0.75" y="0.75" width="4.5" height="28.5" rx="1" fill="#fff" stroke="#1f5492" stroke-width="1.5"/><rect x="10.75" y="0.75" width="4.5" height="28.5" rx="1" fill="#fff" stroke="#1f5492" stroke-width="1.5"/><rect x="20.75" y="0.75" width="4.5" height="28.5" rx="1" fill="#fff" stroke="#1f5492" stroke-width="1.5"/><path d="M2 28L4 25M2 23L4 20M2 18L4 15M2 13L4 10M2 8L4 5M2 4L3 2" stroke="#e33" stroke-width="1"/><rect x="11.5" y="1.5" width="3" height="27" fill="#c8c8c8"/></g>
<g transform="translate(46,54)" shape-rendering="auto"><path d="M1 8L22 3L27 5L6 10Z" fill="#eef1f6" stroke="#1f5492" stroke-width="1.2" stroke-linejoin="round"/><path d="M1 8L6 10V34L1 32Z" fill="#a9b9d0" stroke="#1f5492" stroke-width="1.2" stroke-linejoin="round"/><path d="M6 10L27 5V29L6 34Z" fill="#dfe3ec" stroke="#1f5492" stroke-width="1.5" stroke-linejoin="round"/><path d="M14 19L26 3Q28 1 30 3Q31 5 29 7L17 22L13 23Z" fill="#fff" stroke="#1f5492" stroke-width="1.4" stroke-linejoin="round"/><path d="M13 23L14 19L17 22Z" fill="#1f5492"/></g>
<g transform="translate(85,57)" shape-rendering="auto"><path d="M25.3 10.8L25.3 15.2L22.3 15.0L21.0 18.1L23.3 20.1L20.1 23.3L18.1 21.0L15.0 22.3L15.2 25.3L10.8 25.3L11.0 22.3L7.9 21.0L5.9 23.3L2.7 20.1L5.0 18.1L3.7 15.0L0.7 15.2L0.7 10.8L3.7 11.0L5.0 7.9L2.7 5.9L5.9 2.7L7.9 5.0L11.0 3.7L10.8 0.7L15.2 0.7L15.0 3.7L18.1 5.0L20.1 2.7L23.3 5.9L21.0 7.9L22.3 11.0Z" fill="#fff" stroke="#1f5492" stroke-width="1.5" stroke-linejoin="round"/><circle cx="13" cy="13" r="5.5" fill="none" stroke="#1f5492" stroke-width="1.2"/><circle cx="13" cy="13" r="2.6" fill="none" stroke="#1f5492" stroke-width="1.8"/></g>
<g transform="translate(4,94)" shape-rendering="auto"><rect x="18.0" y="4" width="4" height="2.6" fill="#1f5492"/><rect x="23.5" y="4" width="4" height="2.6" fill="#1f5492"/><rect x="29.0" y="4" width="4" height="2.6" fill="#1f5492"/><rect x="34.5" y="4" width="4" height="2.6" fill="#1f5492"/><rect x="20.0" y="8" width="4" height="2.6" fill="#1f5492"/><rect x="25.5" y="8" width="4" height="2.6" fill="#1f5492"/><rect x="31.0" y="8" width="4" height="2.6" fill="#1f5492"/><rect x="36.5" y="8" width="4" height="2.6" fill="#1f5492"/><rect x="18.0" y="12" width="4" height="2.6" fill="#1f5492"/><rect x="23.5" y="12" width="4" height="2.6" fill="#1f5492"/><rect x="29.0" y="12" width="4" height="2.6" fill="#1f5492"/><rect x="34.5" y="12" width="4" height="2.6" fill="#1f5492"/><rect x="20.0" y="16" width="4" height="2.6" fill="#1f5492"/><rect x="25.5" y="16" width="4" height="2.6" fill="#1f5492"/><rect x="31.0" y="16" width="4" height="2.6" fill="#1f5492"/><rect x="36.5" y="16" width="4" height="2.6" fill="#1f5492"/><path d="M17 3H37M17 19H37" stroke="#1f5492" stroke-width="0.6"/><rect x="2" y="3" width="8" height="20" rx="1" fill="#fff" stroke="#1f5492" stroke-width="1.3"/><ellipse cx="6" cy="3" rx="4" ry="2" fill="#f0f0f0" stroke="#1f5492" stroke-width="1.1"/><rect x="6" y="6" width="7" height="17" rx="1" fill="#fff" stroke="#1f5492" stroke-width="1.2"/><path d="M1 27Q9 14 16 14Q23 17 30 27Q15 31 1 27Z" fill="#9fa9bd" stroke="#1f5492" stroke-width="1.3"/></g>
<g transform="translate(46,96)" shape-rendering="auto"><rect x="14" y="0" width="12" height="26" fill="#c5cbd8"/><rect x="0" y="19" width="10" height="7" fill="#c5cbd8"/><rect x="10.75" y="0.75" width="4.5" height="24.5" rx="1" fill="#fff" stroke="#5d80b0" stroke-width="1.5"/><path d="M24 3H17l3-3M24 11H17l3-3M24 19H17l3-3M2 22H9l-3-3" stroke="#fff" stroke-width="1.5" fill="none"/></g>
<g transform="translate(85,96)" shape-rendering="auto"><rect x="0.75" y="0.75" width="25" height="23" fill="#fff" stroke="#1f5492" stroke-width="1.5"/><rect x="0" y="0" width="26" height="4" fill="#1f5492"/><rect x="10" y="8" width="13" height="2" rx="1" fill="none" stroke="#6a8bb9" stroke-width="0.8"/><rect x="10" y="13" width="13" height="2" rx="1" fill="none" stroke="#6a8bb9" stroke-width="0.8"/><rect x="10" y="18" width="13" height="2" rx="1" fill="none" stroke="#6a8bb9" stroke-width="0.8"/><rect x="10" y="23" width="13" height="2" rx="1" fill="none" stroke="#6a8bb9" stroke-width="0.8"/><path d="M3 5V23M7 5V23M0 10H9M0 14H9M0 18H9" stroke="#b9c5d8" stroke-width="0.8"/><circle cx="23" cy="23" r="6" fill="#fff" stroke="#1f5492" stroke-width="1.8" stroke-dasharray="2 1.2"/><circle cx="23" cy="23" r="2.5" fill="none" stroke="#1f5492" stroke-width="1.2"/></g>
<g transform="translate(129,76)" shape-rendering="auto"><rect x="1" y="3" width="6" height="6" fill="#fff" stroke="#1f5492" stroke-width="1.2"/><rect x="1" y="13" width="6" height="6" fill="#fff" stroke="#1f5492" stroke-width="1.2"/><rect x="1" y="23" width="6" height="6" fill="#fff" stroke="#1f5492" stroke-width="1.2"/><path d="M2 6l2 2l4-5M2 16l2 2l4-5M1 23l6 6M7 23l-6 6" fill="none" stroke="#1f5492" stroke-width="1"/><path d="M14 5Q21 -2 28 5Q21 12 14 5Z" fill="#fff" stroke="#1f5492" stroke-width="1.2"/><circle cx="21" cy="5" r="2.5" fill="#1f5492"/></g>
<g transform="translate(175,74)" shape-rendering="auto"><rect x="0" y="21" width="10" height="7.5" fill="#b6bece"/><rect x="16" y="14.7" width="9.6" height="13.8" fill="#b6bece"/><rect x="10.75" y="3.75" width="4.5" height="24.1" rx="1" fill="#fff" stroke="#1f5492" stroke-width="1.5"/><path d="M20 0.75H28.25V14H17.75V3Z" fill="#fff" stroke="#1f5492" stroke-width="1.5" stroke-linejoin="round"/><path d="M17.75 3.5H20.5V0.75" fill="none" stroke="#1f5492" stroke-width="1"/></g>
<g transform="translate(217,57)" shape-rendering="auto"><rect x="15" y="0" width="11" height="26" fill="#b6bece"/><rect x="0" y="21" width="10" height="5" fill="#b6bece"/><rect x="10.75" y="0.75" width="4.5" height="24.5" rx="1" fill="#fff" stroke="#1f5492" stroke-width="1.5"/><rect x="16" y="6" width="10" height="7" fill="#fff"/><path d="M0 9H11M5.5 3.5V14.5" stroke="#1f5492" stroke-width="2"/></g>
<g transform="translate(257,57)" shape-rendering="auto"><rect x="15" y="0" width="11" height="26" fill="#a8a8a8"/><rect x="0" y="19" width="10" height="7" fill="#a8a8a8"/><rect x="16" y="6" width="10" height="7" fill="#ececec"/><rect x="11.75" y="0.75" width="4.5" height="24.5" rx="1" fill="#f2f2f2" stroke="#a0a0a0" stroke-width="1.5"/><path d="M1 0L9 8M9 0L1 8" stroke="#999" stroke-width="1.3"/></g>
<g transform="translate(298,57)" shape-rendering="auto"><rect x="15" y="0" width="11" height="26" fill="#b6bece"/><rect x="0" y="21" width="10" height="5" fill="#b6bece"/><rect x="10.75" y="0.75" width="4.5" height="24.5" rx="1" fill="#fff" stroke="#1f5492" stroke-width="1.5"/><rect x="16" y="3" width="10" height="10" fill="#fff"/><path d="M14 1.5H26.5V14.5H16" fill="none" stroke="#1f5492" stroke-width="1" stroke-dasharray="1.5 1"/><path d="M11.5 6H15M11.5 10H15" stroke="#6c8bb6"/></g>
<g transform="translate(217,96)" shape-rendering="auto"><rect x="15" y="0" width="11" height="26" fill="#b6bece"/><rect x="0" y="21" width="10" height="5" fill="#b6bece"/><rect x="10.75" y="0.75" width="4.5" height="24.5" rx="1" fill="#fff" stroke="#1f5492" stroke-width="1.5"/><rect x="16" y="8" width="10" height="7" fill="#fff"/><path d="M1 3L4 0L18 14L19 18L15 17Z" fill="#fff" stroke="#1f5492" stroke-width="1.3"/></g>
<g transform="translate(257,96)" shape-rendering="auto"><rect x="15" y="0" width="11" height="26" fill="#b6bece"/><rect x="0" y="21" width="10" height="5" fill="#b6bece"/><rect x="16" y="5" width="10" height="5" fill="#fff"/><rect x="16" y="14" width="10" height="5" fill="#fff"/><rect x="10.75" y="0.75" width="4.5" height="24.5" rx="1" fill="#fff" stroke="#1f5492" stroke-width="1.5"/><path d="M11 8Q1 7 1 11Q2 17 11 18M8 5L11 8L8 11M8 15L11 18L8 21" fill="none" stroke="#1f5492" stroke-width="1.2"/></g>
<g transform="translate(298,96)" shape-rendering="auto"><rect x="15" y="0" width="11" height="26" fill="#98a3ba"/><rect x="0" y="23" width="10" height="3" fill="#98a3ba"/><rect x="16" y="4" width="10" height="9" fill="#fff"/><rect x="10.75" y="0.75" width="4.5" height="24.5" rx="1" fill="#fff" stroke="#1f5492" stroke-width="1.5"/><rect x="0" y="0" width="6" height="6" fill="#f00"/><rect x="0" y="6" width="6" height="5" fill="#0c0"/><rect x="0" y="11" width="6" height="6" fill="#00f"/><path d="M14 0.5H26.5V13.5H16" fill="none" stroke="#1f5492" stroke-width="1" stroke-dasharray="1.5 1"/></g>
<g transform="translate(343,57)" shape-rendering="auto"><rect x="5" y="20" width="16" height="6" fill="#b6bece"/><rect x="0.75" y="0.75" width="4.5" height="24.5" rx="1" fill="#fff" stroke="#1f5492" stroke-width="1.5"/><rect x="21.75" y="0.75" width="4.5" height="24.5" rx="1" fill="#fff" stroke="#1f5492" stroke-width="1.5"/><path d="M6 5H21" stroke="#1f5492" stroke-width="2"/><rect x="6" y="2" width="2" height="6" fill="#1f5492"/><rect x="19" y="2" width="2" height="6" fill="#1f5492"/></g>
<g transform="translate(382,57)" shape-rendering="auto"><rect x="15" y="0" width="11" height="26" fill="#b6bece"/><rect x="0" y="21" width="10" height="5" fill="#b6bece"/><rect x="10.75" y="0.75" width="4.5" height="24.5" rx="1" fill="#fff" stroke="#1f5492" stroke-width="1.5"/><path d="M5 6L22 24" stroke="#1f5492" stroke-width="1.5"/><ellipse cx="21" cy="22" rx="3.5" ry="2" transform="rotate(45 21 22)" fill="#1f5492"/><rect x="8" y="8" width="3" height="3" fill="#1f5492"/></g>
<g transform="translate(343,96)" shape-rendering="auto"><rect x="16" y="0" width="10" height="26" fill="#b6bece"/><rect x="0" y="20" width="10" height="6" fill="#b6bece"/><rect x="10.75" y="0.75" width="4.5" height="24.5" rx="1" fill="#fff" stroke="#1f5492" stroke-width="1.5"/><path d="M5 6L22 24" stroke="#1f5492" stroke-width="1.5"/><ellipse cx="21" cy="22" rx="3.5" ry="2" transform="rotate(45 21 22)" fill="#1f5492"/><path d="M17 11L24 18M24 14V18H20" stroke="#fff" stroke-width="1.2" fill="none"/></g>
<g transform="translate(382,96)" shape-rendering="auto"><rect x="14" y="0" width="12" height="26" fill="#98a3ba"/><rect x="0" y="20" width="14" height="6" fill="#b6bece"/><rect x="14.75" y="0.75" width="4.5" height="24.5" rx="1" fill="#fff" stroke="#1f5492" stroke-width="1.5"/><rect x="0.75" y="5.75" width="13" height="3" fill="#c9d9ea" stroke="#1f5492" stroke-width="1.3"/><path d="M5 0H11L8 4Z" fill="#f00"/></g>
<g transform="translate(424,57)" shape-rendering="auto"><rect x="17" y="0" width="11" height="26" fill="#a9a9a9"/><rect x="0" y="22" width="12" height="4" fill="#a9a9a9"/><rect x="12.75" y="0.75" width="3.5" height="24.5" rx="1" fill="#fbfbfb" stroke="#a5a5a5" stroke-width="1.5"/><path d="M0 13H10M10 10V16" stroke="#a5a5a5" stroke-width="2"/><path d="M1 3L4 0L12 9L12 12L9 11Z" fill="#e8e8e8" stroke="#a5a5a5" stroke-width="1.3"/></g>
<g transform="translate(463,57)" shape-rendering="auto"><rect x="17" y="0" width="11" height="26" fill="#bdbdbd"/><rect x="0" y="22" width="12" height="4" fill="#bdbdbd"/><rect x="12.75" y="0.75" width="3.5" height="24.5" rx="1" fill="#fbfbfb" stroke="#a5a5a5" stroke-width="1.5"/><path d="M0 4H12M0 13H12M6 11V6M4 8L6 6L8 8" stroke="#aaa" stroke-width="1.5" fill="none"/></g>
<g transform="translate(424,96)" shape-rendering="auto"><rect x="17" y="0" width="11" height="26" fill="#a9a9a9"/><rect x="0" y="22" width="12" height="4" fill="#a9a9a9"/><rect x="12.75" y="0.75" width="3.5" height="24.5" rx="1" fill="#fbfbfb" stroke="#a5a5a5" stroke-width="1.5"/><path d="M0 13H12M0 1L7 8M7 1L0 8" stroke="#a5a5a5" stroke-width="1.5"/></g>
<g transform="translate(508,56)" shape-rendering="auto"><path d="M7 1.5H22L27 6.5V27.5H7Z" fill="#fff" stroke="#1f5492" stroke-width="1.5"/><path d="M11 6H17M11 16H19" stroke="#1f5492" stroke-width="1.2"/><path d="M11 9H22M12 12H22M13 19H22M14 22H22" stroke="#a9b8cf" stroke-width="0.8"/><path d="M1 27L6 18L13 11Q15 11 14 14L11 18L16 17Q18 19 15 22L7 30Z" fill="#fff" stroke="#1f5492" stroke-width="1.3"/></g>
<g transform="translate(550,57)" shape-rendering="auto"><rect x="15" y="0" width="11" height="26" fill="#b6bece"/><rect x="0" y="20" width="10" height="6" fill="#b6bece"/><rect x="10.75" y="0.75" width="4.5" height="24.5" rx="1" fill="#fff" stroke="#1f5492" stroke-width="1.5"/><rect x="0" y="12" width="10" height="8" fill="#1f5492"/></g>
<g transform="translate(511,96)" shape-rendering="auto"><rect x="16" y="0" width="10" height="26" fill="#b6bece"/><rect x="0" y="20" width="10" height="6" fill="#b6bece"/><rect x="10.75" y="0.75" width="4.5" height="24.5" rx="1" fill="#fff" stroke="#1f5492" stroke-width="1.5"/><path d="M4 0V8M1 5L4 8L7 5M0 11H10" stroke="#1f5492" stroke-width="1.2" fill="none"/><path d="M18 6H24L21 10Z" fill="#fff"/><path d="M18 13H24L21 17Z" fill="#dfe3ec"/></g>
<g transform="translate(595,57)" shape-rendering="auto"><path d="M7 3Q21 4 17 17Q14 26 5 26" fill="none" stroke="#1f5492" stroke-width="1.5"/><path d="M1 3L7 0V6Z" fill="#1f5492"/><path d="M0 15H20M5 8V23" stroke="#7b96bd" stroke-width="1"/><path d="M20 13L24 15L20 17Z M3 21L5 25L7 21Z" fill="#7b96bd"/></g>
<g transform="translate(631,55)" shape-rendering="auto"><path d="M17 3V27M26 3V27M14 24L17 27L20 24M23 24L26 27L29 24" fill="none" stroke="#1f5492" stroke-width="1.5"/><path d="M1 3L4 0L17 13L18 17L14 16Z" fill="#fff" stroke="#1f5492" stroke-width="1.3"/></g>
<g transform="translate(595,93)" shape-rendering="auto"><rect x="12" y="11" width="13" height="18" fill="#b6bece"/><rect x="0" y="24" width="7" height="5" fill="#b6bece"/><rect x="7.25" y="10.75" width="4.0" height="17.5" rx="1" fill="#fff" stroke="#1f5492" stroke-width="1.5"/><path d="M15 0V9.5M23 0V9.5M12 6.5L15 9.5L18 6.5M20 6.5L23 9.5L26 6.5" fill="none" stroke="#1f5492" stroke-width="1.4"/></g>
<g transform="translate(631,96)" shape-rendering="auto"><path d="M0 19H6L4 23H0ZM13 23L16 19H30V23Z" fill="#9aa8c0"/><path d="M5 14L19 5H28L14 14Z" fill="#dfe4ec" stroke="#1f5492" stroke-width="1.2"/><path d="M5 14H14V19H5Z" fill="#fff" stroke="#1f5492" stroke-width="1.2"/><path d="M14 14L28 5V10L14 19Z" fill="#8fa0bc" stroke="#1f5492" stroke-width="1.2"/></g>
<g transform="translate(679,57)" shape-rendering="auto"><rect x="14" y="1" width="12" height="25" fill="#b9c1d1"/><rect x="17" y="1" width="1" height="25" fill="#e9ecf2"/><rect x="20.5" y="1" width="1" height="25" fill="#e9ecf2"/><rect x="24" y="1" width="1" height="25" fill="#e9ecf2"/><rect x="14" y="4" width="12" height="1" fill="#e9ecf2"/><rect x="14" y="8" width="12" height="1" fill="#e9ecf2"/><rect x="14" y="12" width="12" height="1" fill="#e9ecf2"/><rect x="14" y="16" width="12" height="1" fill="#e9ecf2"/><rect x="14" y="20" width="12" height="1" fill="#e9ecf2"/><rect x="14" y="24" width="12" height="1" fill="#e9ecf2"/><rect x="0" y="20" width="8" height="6" fill="#b6bece"/><rect x="8.75" y="1.75" width="4.0" height="23.5" rx="1" fill="#fff" stroke="#1f5492" stroke-width="1.5"/><path d="M13 0Q14 18 27 17" fill="none" stroke="#1f5492" stroke-width="1.2"/></g>
<g transform="translate(717,57)" shape-rendering="auto"><path d="M0 13H27M13 0V26" stroke="#8fa7c9" stroke-width="1.2"/><path d="M1 21Q8 22 12 14Q16 5 27 5" fill="none" stroke="#e22" stroke-width="1.5"/></g>
<g transform="translate(679,96)" shape-rendering="auto"><path d="M7 4V27" stroke="#c5ccd9" stroke-width="0.8"/><path d="M12 4V27" stroke="#c5ccd9" stroke-width="0.8"/><path d="M17 4V27" stroke="#c5ccd9" stroke-width="0.8"/><path d="M22 4V27" stroke="#c5ccd9" stroke-width="0.8"/><path d="M2 9H27" stroke="#c5ccd9" stroke-width="0.8"/><path d="M2 14H27" stroke="#c5ccd9" stroke-width="0.8"/><path d="M2 19H27" stroke="#c5ccd9" stroke-width="0.8"/><path d="M2 24H27" stroke="#c5ccd9" stroke-width="0.8"/><path d="M2 0V28H27" fill="none" stroke="#1f5492" stroke-width="1"/><path d="M7 1Q10 22 27 22" fill="none" stroke="#1f5492" stroke-width="1.2"/></g>
<g transform="translate(717,96)" shape-rendering="auto"><rect x="1" y="0" width="26" height="26" fill="#9aa7bd"/><rect x="1" y="0" width="11" height="13" fill="#f5f5f5"/><rect x="12.25" y="0.75" width="4.0" height="18.5" rx="1" fill="#fff" stroke="#1f5492" stroke-width="1.5"/><path d="M25 0Q26 25 14 24Q3 23 2 14" fill="none" stroke="#e22" stroke-width="1.2"/><path d="M2 14L10 0" fill="none" stroke="#e22" stroke-width="1" stroke-dasharray="1.5 1.2"/></g>
<g transform="translate(762,57)" shape-rendering="auto"><path d="M2 26L27 2" stroke="#1f5492" stroke-width="1.5"/><path d="M1 10L6 16L15 3" fill="none" stroke="#1db31d" stroke-width="3"/><path d="M17 17L26 26M26 17L17 26" stroke="#e22" stroke-width="2.5"/></g>
<g transform="translate(806,61)" shape-rendering="auto"><path d="M0 0L19 10L0 20Z" fill="#a6a6a6"/></g>
<g transform="translate(762,93)" shape-rendering="auto"><path d="M1 6H27M1 2V10M27 2V10M1 6L5 3M1 6L5 9M27 6L23 3M27 6L23 9" fill="none" stroke="#1f5492" stroke-width="1.3"/><path d="M6 12L24 20L6 29Z" fill="#1f5492"/></g>
<g transform="translate(852,74)" shape-rendering="auto"><rect x="0" y="0" width="32" height="32" fill="#d5dae4"/><rect x="0" y="16" width="24" height="16" fill="#a9b4c7"/><rect x="28" y="0" width="4" height="32" fill="#f5f5f5"/><path d="M10 32L32 10V16L16 32Z" fill="#f5f5f5"/><path d="M28 0V32" stroke="#d5dae4"/><path d="M12 19Q6 11 6 8Q6 3 12 3Q18 3 18 8Q18 11 12 19Z" fill="#fff" stroke="#1f5492" stroke-width="1.5"/><circle cx="12" cy="8" r="2" fill="#1f5492"/></g>
<rect x="903.5" y="71.5" width="37" height="37" fill="#b9d9ee" stroke="#5c8ec2"/>
<g transform="translate(911,80)" shape-rendering="auto"><path d="M2 8L10 4L19 7L11 11Z" fill="#f2f2f2" stroke="#1f5492" stroke-width="1"/><path d="M2 8V20L11 24V11Z" fill="#fff" stroke="#1f5492" stroke-width="1"/><path d="M11 11L19 7V19L11 24Z" fill="#c3c9d6" stroke="#1f5492" stroke-width="1"/><path d="M19 17L25 19L19 21Z" fill="#1f5492"/><path d="M11 0V4M0 20H2" stroke="#8fb3d3" stroke-width="0.6"/></g>
<g transform="translate(958,56)" shape-rendering="auto"><path d="M22 4Q14 -2 6 3Q0 8 1 15Q3 24 13 26Q22 26 25 18" fill="none" stroke="#222" stroke-width="1.4"/><path d="M19 1L26 2L24 8Z" fill="#222"/><g transform="translate(13,13) scale(1)"><circle cx="-3" cy="-3" r="4" fill="none" stroke="#2fb4e0" stroke-width="2.2"/><circle cx="3" cy="-3" r="4" fill="none" stroke="#e23b3b" stroke-width="2.2"/><circle cx="-3" cy="3" r="4" fill="none" stroke="#f0b323" stroke-width="2.2"/><circle cx="3" cy="3" r="4" fill="none" stroke="#5cb85c" stroke-width="2.2"/></g></g>
<g transform="translate(1000,54)" shape-rendering="auto"><g transform="translate(14,17) scale(1.35)"><circle cx="-3" cy="-3" r="4" fill="none" stroke="#2fb4e0" stroke-width="2.2"/><circle cx="3" cy="-3" r="4" fill="none" stroke="#e23b3b" stroke-width="2.2"/><circle cx="-3" cy="3" r="4" fill="none" stroke="#f0b323" stroke-width="2.2"/><circle cx="3" cy="3" r="4" fill="none" stroke="#5cb85c" stroke-width="2.2"/></g><path d="M13 13Q16 6 25 5" fill="none" stroke="#222" stroke-width="2.5"/><path d="M23 1L30 5L23 9Z" fill="#222"/></g>
<text x="82" y="141" font-size="12" fill="#3c3c3c" text-anchor="middle" font-weight="normal" textLength="37" lengthAdjust="spacingAndGlyphs">Project</text>
<text x="249" y="141" font-size="12" fill="#3c3c3c" text-anchor="middle" font-weight="normal" textLength="18" lengthAdjust="spacingAndGlyphs">Soil</text>
<text x="417" y="141" font-size="12" fill="#3c3c3c" text-anchor="middle" font-weight="normal" textLength="91" lengthAdjust="spacingAndGlyphs">Support elements</text>
<text x="585" y="141" font-size="12" fill="#3c3c3c" text-anchor="middle" font-weight="normal" textLength="32" lengthAdjust="spacingAndGlyphs">Phase</text>
<text x="753" y="141" font-size="12" fill="#3c3c3c" text-anchor="middle" font-weight="normal" textLength="46" lengthAdjust="spacingAndGlyphs">Analysis</text>
<text x="867" y="141" font-size="12" fill="#3c3c3c" text-anchor="middle" font-weight="normal" textLength="52" lengthAdjust="spacingAndGlyphs">Floor plan</text>
<text x="921" y="141" font-size="12" fill="#3c3c3c" text-anchor="middle" font-weight="normal" textLength="42" lengthAdjust="spacingAndGlyphs">3D View</text>
<text x="991" y="141" font-size="12" fill="#3c3c3c" text-anchor="middle" font-weight="normal" textLength="54" lengthAdjust="spacingAndGlyphs">BIM model</text>
<text x="971" y="101" font-size="12" fill="#1a1a1a" text-anchor="middle" font-weight="normal" textLength="38" lengthAdjust="spacingAndGlyphs">Update</text>
<text x="1013" y="101" font-size="12" fill="#1a1a1a" text-anchor="middle" font-weight="normal" textLength="30" lengthAdjust="spacingAndGlyphs">Share</text>
<rect x="165" y="52" width="1" height="90" fill="#ababab"/>
<rect x="333" y="52" width="1" height="90" fill="#ababab"/>
<rect x="501" y="52" width="1" height="90" fill="#ababab"/>
<rect x="669" y="52" width="1" height="90" fill="#ababab"/>
<rect x="837" y="52" width="1" height="90" fill="#ababab"/>
<rect x="897" y="52" width="1" height="90" fill="#ababab"/>
<rect x="946" y="52" width="1" height="90" fill="#ababab"/>
<rect x="1036" y="52" width="1" height="90" fill="#ababab"/>
<rect x="120" y="52" width="1" height="75" fill="#ababab"/>
<rect x="210" y="52" width="1" height="75" fill="#ababab"/>
<rect x="417" y="52" width="1" height="75" fill="#ababab"/>
<rect x="585" y="52" width="1" height="75" fill="#ababab"/>
<rect x="753" y="52" width="1" height="75" fill="#ababab"/>
<rect x="1919" y="52" width="1" height="90" fill="#a0a0a0"/>
<rect x="0" y="1004" width="1920" height="16" fill="#f0f0f0"/>
<rect x="0" y="1020" width="1920" height="1" fill="#d6d6d6"/>
<rect x="0" y="1021" width="1920" height="19" fill="#f0f0f0"/>
<rect x="0" y="1040" width="1920" height="40" fill="#213440"/>

<path d="M91 1004.5H1920" stroke="#000" stroke-width="1"/>
<g shape-rendering="auto"><path d="M85 1011.5L91 1004.5H191L177.5 1019.5H92Z" fill="#fff" stroke="#000"/><path d="M0.5 1004.5L16 1019.5H77L85 1011.5" fill="none" stroke="#000"/></g>
<text x="19.5" y="1016" font-size="12.5" fill="#000" text-anchor="start" font-weight="normal" textLength="53" lengthAdjust="spacingAndGlyphs">Data entry</text>
<text x="95.5" y="1016" font-size="12.5" fill="#000" text-anchor="start" font-weight="normal" textLength="78" lengthAdjust="spacingAndGlyphs">Reinforcement</text>
<text x="9" y="1035" font-size="12.5" fill="#000" text-anchor="start" font-weight="normal" textLength="1737" lengthAdjust="spacingAndGlyphs">Type. The types of embedded walls that may be defined are the following:-Generic embedded wall. Embedded wall of any material (to be defined in the option 'General data &gt; Geometry'). The design of the reinforcement is not carried out.-Diaphragm wall. The reinforcement is obtained.-Piled retaining walls. Secant pile wall or ano</text>
<text x="1762" y="1035" font-size="12.5" fill="#000" text-anchor="start" font-weight="normal" textLength="32" lengthAdjust="spacingAndGlyphs">Phase</text>
<rect x="540" y="1040" width="48" height="40" fill="#3b4d58"/>
<rect x="152" y="1078" width="40" height="2" fill="#76b9ed"/>
<rect x="250" y="1078" width="40" height="2" fill="#76b9ed"/>
<rect x="299" y="1078" width="40" height="2" fill="#76b9ed"/>
<rect x="348" y="1078" width="40" height="2" fill="#76b9ed"/>
<rect x="397" y="1078" width="40" height="2" fill="#76b9ed"/>
<rect x="446" y="1078" width="40" height="2" fill="#76b9ed"/>
<rect x="495" y="1078" width="40" height="2" fill="#76b9ed"/>
<rect x="540" y="1078" width="48" height="2" fill="#76b9ed"/>
<g transform="translate(16,1052)" shape-rendering="auto"><path d="M0 2L7 1V7H0ZM8 1L16 0V7H8ZM0 8H7V15L0 14ZM8 8H16V16L8 15Z" fill="#fff"/></g>
<g transform="translate(63,1050)" shape-rendering="auto"><circle cx="11" cy="7" r="6" fill="none" stroke="#fff" stroke-width="1.4"/><path d="M7 11L1 18" stroke="#fff" stroke-width="1.6"/></g>
<g transform="translate(111,1048)" shape-rendering="auto"><defs><linearGradient id="edg" x1="0" y1="0" x2="1" y2="1"><stop offset="0" stop-color="#35c1f1"/><stop offset="0.5" stop-color="#1f8de0"/><stop offset="1" stop-color="#0c59a4"/></linearGradient></defs><circle cx="12" cy="12" r="12" fill="url(#edg)"/><path d="M12 8Q20 6 23 14Q22 20 16 22Q10 20 12 15Q14 12 19 14" fill="#5ad06a"/><path d="M6 14Q8 8 14 10Q16 14 13 17Q9 19 8 22Q4 19 6 14Z" fill="#0a3d8a"/></g>
<g transform="translate(161,1051)" shape-rendering="auto"><path d="M0 1H7L9 3H22V18H0Z" fill="#f5c33b"/><rect x="0" y="4" width="22" height="14" fill="#fcd667"/><rect x="5" y="10" width="12" height="3" fill="#3c8fe0"/><rect x="5" y="10" width="3" height="8" fill="#3c8fe0"/><rect x="14" y="10" width="3" height="8" fill="#3c8fe0"/></g>
<g transform="translate(210,1049)" shape-rendering="auto"><path d="M11 0L21 6V17L11 23L1 17V6Z" fill="#7b6ad6"/><path d="M11 0L21 6V11L11 5Z" fill="#42a7e8"/><path d="M1 17L11 23L21 17L15 13L11 16Z" fill="#b283e0"/><path d="M8 8L15 12L8 16Z" fill="#1f2e38"/></g>
<g transform="translate(258,1048)" shape-rendering="auto"><path d="M12 12L1.61 6A12 12 0 0 1 22.39 6Z" fill="#db4437"/><path d="M12 12L22.39 6A12 12 0 0 1 12 24Z" fill="#f4b400"/><path d="M12 12L12 24A12 12 0 0 1 1.61 6Z" fill="#0f9d58"/><circle cx="12" cy="12" r="5.5" fill="#fff"/><circle cx="12" cy="12" r="4.3" fill="#4285f4"/><circle cx="17" cy="17" r="6.5" fill="#1a9bb0"/><rect x="16.2" y="15" width="1.6" height="6" fill="#dff"/><rect x="16.2" y="12.5" width="1.6" height="1.5" fill="#dff"/></g>
<g transform="translate(308,1049)" shape-rendering="auto"><rect x="0" y="0" width="21" height="21" rx="3" fill="#0d0d12"/><path d="M10 4Q12 4 11 9L16 15Q18 16 16 17L11 15L5 17Q3 17 5 15L9 9Q8 4 10 4Z" fill="none" stroke="#fff" stroke-width="1.2"/></g>
<g transform="translate(356,1048)" shape-rendering="auto"><path d="M12 12L1.61 6A12 12 0 0 1 22.39 6Z" fill="#db4437"/><path d="M12 12L22.39 6A12 12 0 0 1 12 24Z" fill="#f4b400"/><path d="M12 12L12 24A12 12 0 0 1 1.61 6Z" fill="#0f9d58"/><circle cx="12" cy="12" r="5.5" fill="#fff"/><circle cx="12" cy="12" r="4.3" fill="#4285f4"/><text x="11" y="24" font-size="10" font-weight="bold" fill="#2db52d">S</text><text x="17" y="24" font-size="10" font-weight="bold" fill="#e23">P</text></g>
<g transform="translate(405,1048)" shape-rendering="auto"><path d="M12 1L22 6V18L12 23L2 18V6Z" fill="#b5213a"/><path d="M12 1L22 6L12 11L2 6Z" fill="#d0364f"/><path d="M12 11V23L2 18V6Z" fill="#8f1a2e"/><circle cx="13" cy="12" r="3" fill="#d0364f"/></g>
<g transform="translate(455,1049)" shape-rendering="auto"><rect x="9" y="3" width="13" height="16" fill="#fff" stroke="#1d7044"/><path d="M11 7H20M11 10H20M11 13H20M11 16H20M15 4V18" stroke="#1d7044" stroke-width="0.8"/><path d="M0 3L12 0V22L0 19Z" fill="#1d7044"/><text x="2" y="15" font-size="9" font-weight="bold" fill="#fff">X</text></g>
<g transform="translate(503,1049)" shape-rendering="auto"><rect x="9" y="3" width="13" height="16" fill="#fff" stroke="#2b5797"/><path d="M11 7H20M11 10H20M11 13H20M11 16H20" stroke="#2b5797" stroke-width="1"/><path d="M0 3L12 0V22L0 19Z" fill="#2b5797"/><text x="1" y="15" font-size="9" font-weight="bold" fill="#fff">W</text></g>
<g transform="translate(552,1048)" shape-rendering="auto"><rect x="0" y="0" width="24" height="24" rx="2" fill="#d0202e"/><rect x="3" y="7" width="18" height="14" fill="url(#lgd)"/><rect x="3.5" y="15" width="17" height="5.5" fill="url(#hat)"/><path d="M7 7.5L10 9.5V18H7ZM14 7.5L17 9.5V18H14Z" fill="#fff"/><path d="M10 13H14V15H10Z" fill="#bbb"/></g>
<g transform="translate(1672,1054)" shape-rendering="auto"><path d="M1 8L6 3L11 8" fill="none" stroke="#fff" stroke-width="1.4"/></g>
<g transform="translate(1692,1053)" shape-rendering="auto"><path d="M4 13Q0 13 0 10Q0 7 4 7Q5 3 10 3Q15 3 15 7Q19 7 19 10Q19 13 15 13Z" fill="#d8d8d8"/></g>
<g transform="translate(1719,1051)" shape-rendering="auto"><path d="M1 15A14 14 0 0 1 15 1M4 15A11 11 0 0 1 15 4M7 15A8 8 0 0 1 15 7M10 15A5 5 0 0 1 15 10" fill="none" stroke="#fff" stroke-width="1.1"/><circle cx="14" cy="15" r="1.5" fill="#fff"/></g>
<g transform="translate(1741,1051)" shape-rendering="auto"><path d="M1 6H4L8 2V16L4 12H1Z" fill="none" stroke="#fff" stroke-width="1.1"/><path d="M10 6Q12 9 10 12M12 4Q15 9 12 14M14 2Q18 9 14 16" fill="none" stroke="#fff" stroke-width="1.1"/></g>
<g transform="translate(1878,1051)" shape-rendering="auto"><path d="M1 1H17V13H7L3 17V13H1Z" fill="#fff"/><path d="M4 5H14M4 8H14" stroke="#1f2e38" stroke-width="1"/><circle cx="15" cy="14" r="3" fill="#1f2e38" stroke="#fff" stroke-width="1"/></g>
<rect x="1917" y="1040" width="1" height="40" fill="#4a5a66"/>
<text x="1831" y="1056" font-size="12" fill="#fff" text-anchor="middle" font-weight="normal" textLength="47" lengthAdjust="spacingAndGlyphs">11:28 am</text>
<text x="1832" y="1073" font-size="12" fill="#fff" text-anchor="middle" font-weight="normal" textLength="58" lengthAdjust="spacingAndGlyphs">13/05/2024</text>
<text x="1779" y="1064" font-size="12" fill="#fff" text-anchor="middle" font-weight="normal" textLength="21" lengthAdjust="spacingAndGlyphs">TUR</text>
</svg></body></html>
